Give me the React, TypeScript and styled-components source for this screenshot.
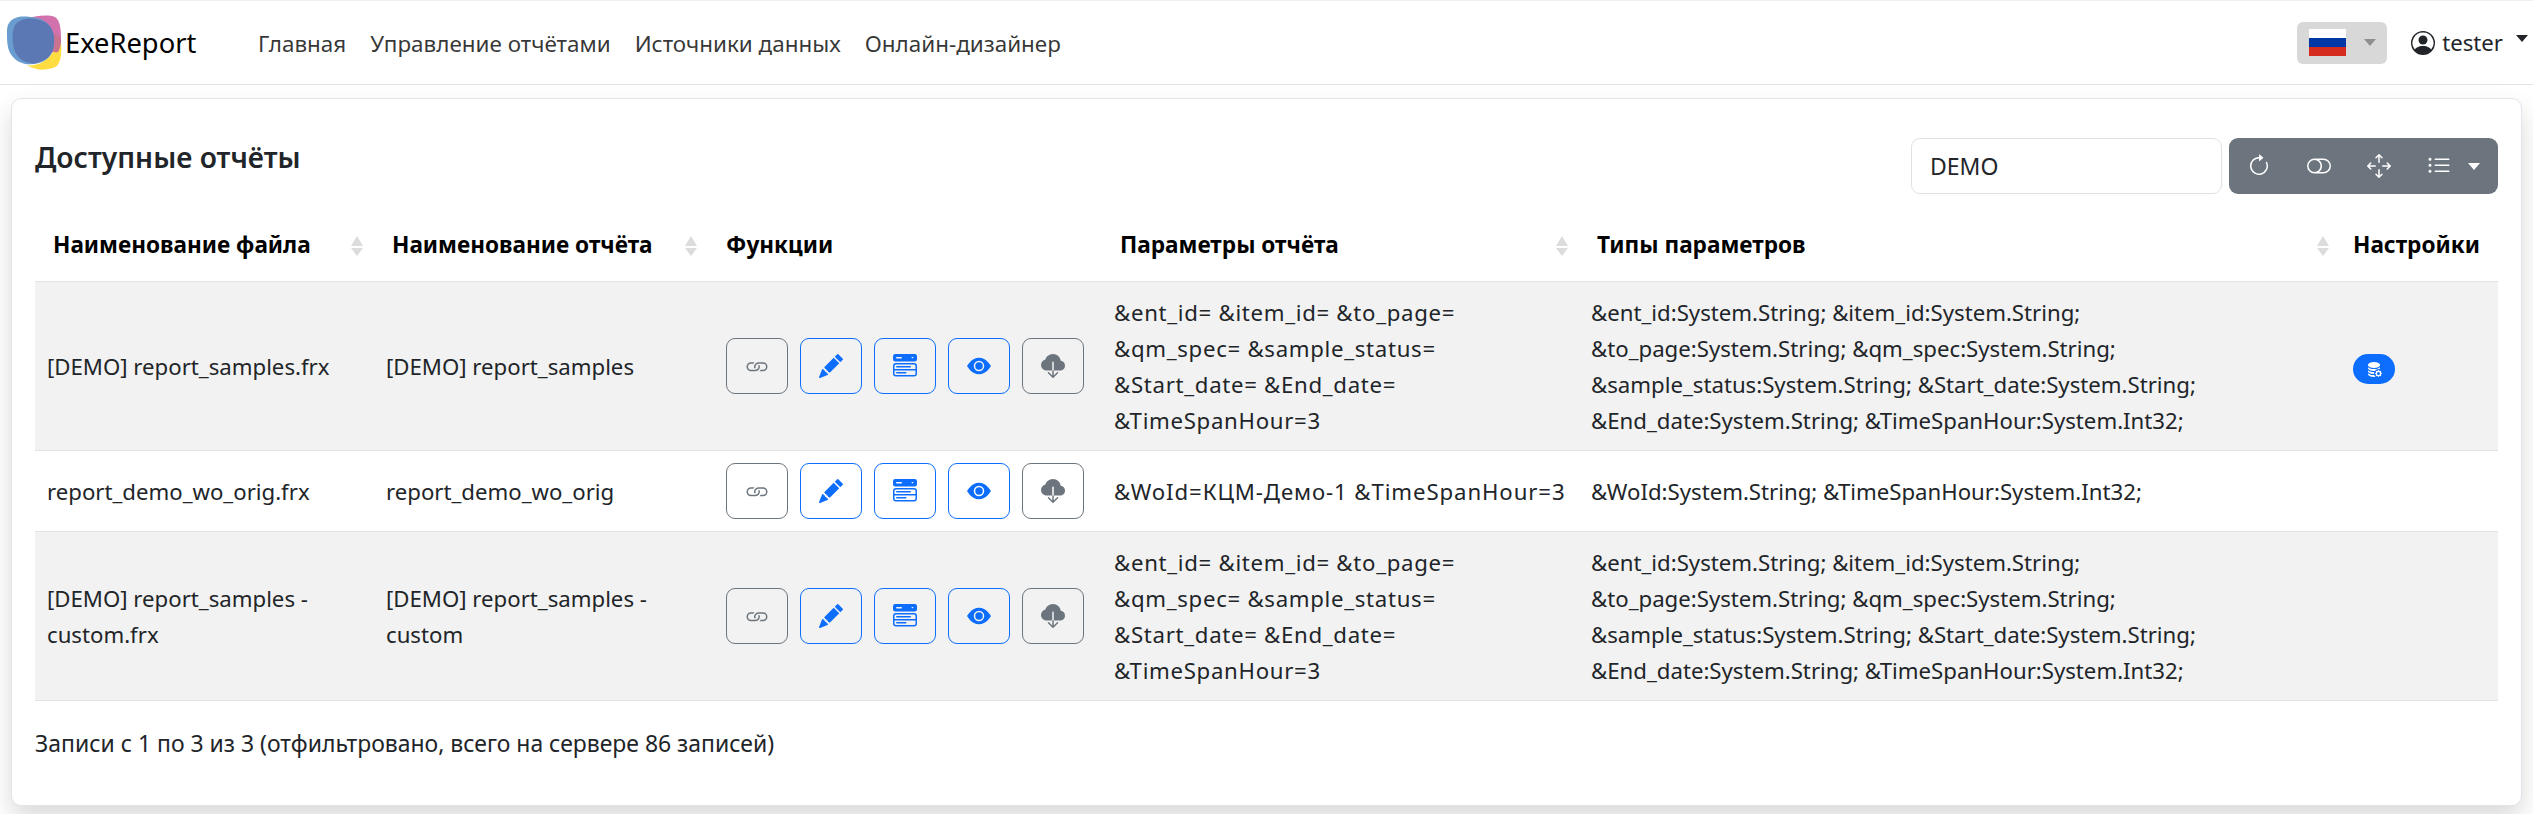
import React from "react";
import styled, { createGlobalStyle } from "styled-components";
import {
  BsArrowClockwise,
  BsArrowsMove,
  BsCloudDownloadFill,
  BsDatabaseFillGear,
  BsEyeFill,
  BsLink,
  BsListUl,
  BsMenuButtonWideFill,
  BsPencilFill,
  BsPersonCircle,
  BsToggleOff,
} from "react-icons/bs";

const LONG_PARAMS = [
  "&ent_id= &item_id= &to_page=",
  "&qm_spec= &sample_status=",
  "&Start_date= &End_date=",
  "&TimeSpanHour=3",
];
const LONG_TYPES =
  "&ent_id:System.String; &item_id:System.String; &to_page:System.String; &qm_spec:System.String; &sample_status:System.String; &Start_date:System.String; &End_date:System.String; &TimeSpanHour:System.Int32;";

const reports = [
  {
    file: "[DEMO] report_samples.frx",
    name: "[DEMO] report_samples",
    params: LONG_PARAMS,
    types: LONG_TYPES,
    settings: true,
    spacing: 0.7,
  },
  {
    file: "report_demo_wo_orig.frx",
    name: "report_demo_wo_orig",
    params: ["&WoId=КЦМ-Демо-1 &TimeSpanHour=3"],
    types: "&WoId:System.String; &TimeSpanHour:System.Int32;",
    settings: false,
    spacing: 0.9,
  },
  {
    file: "[DEMO] report_samples - custom.frx",
    name: "[DEMO] report_samples - custom",
    params: LONG_PARAMS,
    types: LONG_TYPES,
    settings: false,
    spacing: 0.7,
  },
];

const columns = [
  { title: "Наименование файла", width: 339, sortRight: 11 },
  { title: "Наименование отчёта", width: 340, sortRight: 17 },
  { title: "Функции", width: 388 },
  { title: "Параметры отчёта", width: 477, sortRight: 11 },
  { title: "Типы параметров", width: 762, sortRight: 12 },
  { title: "Настройки", width: 157 },
];

const App = () => {
  return (
    <>
      <GlobalStyle />
      <StyledNavbar>
        <StyledBrand>
          <svg width="56" height="56" viewBox="0 0 56 56">
            <path
              d="M18 4 C28 1 40 -1 48 2 C53 5 54 14 54 24 C54 30 53 36 50 40 L30 30Z"
              fill="#d271ab"
            />
            <path
              d="M20 50 C30 52 40 46 47 36 C50 32 53 30 54 28 C55 38 54 46 50 51 C44 55 30 57 20 50Z"
              fill="#ffdc3f"
            />
            <path
              d="M2 8 C8 0 18 1 30 3 C42 6 47 14 47 26 C47 38 42 45 32 48 C22 51 12 49 6 42 C0 36 0 26 0 18 C0 14 0 11 2 8Z"
              fill="#6a9dcf"
            />
            <path
              d="M47 18 C50 20 54 22 54 26 C54 30 53 34 51 37 C49 38 47 37 46 36 C48 30 48 24 47 18Z"
              fill="#c9738f"
            />
            <path
              d="M8 10 C14 2 28 2 38 7 C46 12 48 20 47 30 C46 40 40 45 30 48 C20 50 10 44 7 34 C5 26 5 16 8 10Z"
              fill="#5c78b4"
            />
          </svg>
          <StyledBrandName>ExeReport</StyledBrandName>
        </StyledBrand>
        <StyledNavLinks>
          <StyledNavLink>Главная</StyledNavLink>
          <StyledNavLink>Управление отчётами</StyledNavLink>
          <StyledNavLink>Источники данных</StyledNavLink>
          <StyledNavLink>Онлайн-дизайнер</StyledNavLink>
        </StyledNavLinks>
        <StyledNavRight>
          <StyledLangButton>
            <StyledFlag>
              <StyledFlagStripe $color="#ffffff" />
              <StyledFlagStripe $color="#0039a6" />
              <StyledFlagStripe $color="#d52b1e" />
            </StyledFlag>
            <StyledCaret $color="#8f8f8f" />
          </StyledLangButton>
          <StyledUser>
            <BsPersonCircle size={24} />
            <span>tester</span>
            <StyledCaret $color="#212529" />
          </StyledUser>
        </StyledNavRight>
      </StyledNavbar>

      <StyledCard>
        <StyledCardHead>
          <StyledTitle>Доступные отчёты</StyledTitle>
          <StyledTools>
            <StyledSearch defaultValue="DEMO" />
            <StyledToolGroup>
              <StyledToolButton>
                <BsArrowClockwise size={24} />
              </StyledToolButton>
              <StyledToolButton>
                <BsToggleOff size={24} />
              </StyledToolButton>
              <StyledToolButton>
                <BsArrowsMove size={24} />
              </StyledToolButton>
              <StyledToolButton>
                <BsListUl size={24} />
                <StyledCaret $color="#ffffff" />
              </StyledToolButton>
            </StyledToolGroup>
          </StyledTools>
        </StyledCardHead>

        <StyledTable>
          <colgroup>
            {columns.map((col) => (
              <col key={col.title} width={col.width} />
            ))}
          </colgroup>
          <thead>
            <tr>
              {columns.map((col) => (
                <StyledTh key={col.title} $sortable={col.sortRight !== undefined}>
                  {col.title}
                  {col.sortRight !== undefined ? (
                    <StyledSort $right={col.sortRight}>
                      <StyledSortUp />
                      <StyledSortDown />
                    </StyledSort>
                  ) : null}
                </StyledTh>
              ))}
            </tr>
          </thead>
          <tbody>
            {reports.map((report, index) => (
              <StyledRow key={report.file} $odd={index % 2 === 0}>
                <StyledTd>{report.file}</StyledTd>
                <StyledTd>{report.name}</StyledTd>
                <StyledTd>
                  <StyledActions>
                    <StyledAction $variant="gray">
                      <BsLink size={24} />
                    </StyledAction>
                    <StyledAction $variant="blue">
                      <BsPencilFill size={24} />
                    </StyledAction>
                    <StyledAction $variant="blue">
                      <BsMenuButtonWideFill size={24} />
                    </StyledAction>
                    <StyledAction $variant="blue">
                      <BsEyeFill size={24} />
                    </StyledAction>
                    <StyledAction $variant="gray">
                      <BsCloudDownloadFill size={24} />
                    </StyledAction>
                  </StyledActions>
                </StyledTd>
                <StyledParamsTd $spacing={report.spacing}>
                  {report.params.map((line) => (
                    <StyledParamLine key={line}>{line}</StyledParamLine>
                  ))}
                </StyledParamsTd>
                <StyledTd>{report.types}</StyledTd>
                <StyledTd>
                  {report.settings ? (
                    <StyledBadge>
                      <BsDatabaseFillGear size={16} />
                    </StyledBadge>
                  ) : null}
                </StyledTd>
              </StyledRow>
            ))}
          </tbody>
        </StyledTable>

        <StyledInfo>
          Записи с 1 по 3 из 3 (отфильтровано, всего на сервере 86 записей)
        </StyledInfo>
      </StyledCard>
    </>
  );
};

export default App;

const FONT = `"Noto Sans", "Open Sans", sans-serif`;

const GlobalStyle = createGlobalStyle`
  html, body {
    margin: 0;
    padding: 0;
    background: #ffffff;
  }

  body {
    font-family: ${FONT};
    font-size: 22.2px;
    line-height: 36px;
    color: #212529;
  }

  #root {
    height: 814px;
    overflow: visible;
  }
`;

const StyledNavbar = styled.nav`
  height: 85px;
  box-sizing: border-box;
  border-top: 1px solid #f0f0f0;
  border-bottom: 1px solid #e3e3e6;
  display: flex;
  align-items: center;
  padding: 0 5px 0 7px;
`;

const StyledBrand = styled.div`
  display: flex;
  align-items: center;
  gap: 2px;
  width: 251px;
`;

const StyledBrandName = styled.span`
  font-size: 27.3px;
  color: #000000;
`;

const StyledNavLinks = styled.div`
  display: flex;
  gap: 24px;
  flex: 1;
  padding-top: 2px;
  font-size: 22.45px;
`;

const StyledNavLink = styled.a`
  color: rgba(0, 0, 0, 0.8);
`;

const StyledNavRight = styled.div`
  display: flex;
  align-items: center;
  gap: 24px;
`;

const StyledLangButton = styled.div`
  width: 90px;
  height: 42px;
  box-sizing: border-box;
  padding: 0 11px 0 12px;
  background: #d8d8d8;
  border-radius: 6px;
  display: flex;
  align-items: center;
  justify-content: space-between;
`;

const StyledFlag = styled.div`
  width: 37px;
  height: 28px;
  display: flex;
  flex-direction: column;
`;

const StyledFlagStripe = styled.span<{ $color: string }>`
  flex: 1;
  background: ${(p) => p.$color};
`;

const StyledCaret = styled.span<{ $color: string }>`
  display: inline-block;
  width: 0;
  height: 0;
  border-top: 7px solid ${(p) => p.$color};
  border-left: 6.5px solid transparent;
  border-right: 6.5px solid transparent;
`;

const StyledUser = styled.div`
  display: flex;
  align-items: center;
  gap: 7px;
  color: #212529;

  span:last-child {
    margin-left: 6px;
    margin-top: -8px;
  }
`;

const StyledCard = styled.main`
  margin: 13px 11px 0;
  height: 708px;
  box-sizing: border-box;
  padding: 24px 23px 0;
  background: #ffffff;
  border: 1px solid #e3e3ec;
  border-radius: 10px;
  box-shadow: 0 12px 24px rgba(0, 0, 0, 0.15);
`;

const StyledCardHead = styled.div`
  display: flex;
  justify-content: space-between;
  padding-top: 15px;
  height: 71px;
  box-sizing: border-box;
`;

const StyledTitle = styled.h5`
  margin: -1px 0 0;
  font-size: 28.2px;
  font-weight: 600;
  line-height: 40px;
`;

const StyledTools = styled.div`
  display: flex;
  gap: 7px;
`;

const StyledSearch = styled.input`
  width: 311px;
  height: 56px;
  box-sizing: border-box;
  padding: 0 18px;
  border: 1px solid #dee2e6;
  border-radius: 9px;
  font: inherit;
  font-size: 23px;
  color: #212529;
  outline: none;
`;

const StyledToolGroup = styled.div`
  height: 56px;
  display: flex;
  background: #6c757d;
  border-radius: 9px;
  color: #ffffff;
`;

const StyledToolButton = styled.div`
  display: flex;
  align-items: center;
  justify-content: center;
  gap: 17px;
  padding: 0 18px;
  min-width: 24px;
`;

const StyledTable = styled.table`
  width: 2463px;
  table-layout: fixed;
  border-collapse: collapse;
`;

const StyledTh = styled.th<{ $sortable: boolean }>`
  position: relative;
  height: 87px;
  box-sizing: border-box;
  padding: 16px 12px 0 ${(p) => (p.$sortable ? "18px" : "12px")};
  text-align: left;
  font-size: 22.6px;
  font-weight: 700;
  vertical-align: middle;
  border-bottom: 1.5px solid #e5e5e8;
  color: #000000;
  white-space: nowrap;
`;

const StyledSort = styled.span<{ $right: number }>`
  position: absolute;
  right: ${(p) => p.$right}px;
  top: 42px;
  display: flex;
  flex-direction: column;
  gap: 2px;
`;

const StyledSortUp = styled.span`
  width: 0;
  height: 0;
  border-bottom: 10px solid #dcdcdc;
  border-left: 6px solid transparent;
  border-right: 6px solid transparent;
`;

const StyledSortDown = styled.span`
  width: 0;
  height: 0;
  border-top: 8px solid #dcdcdc;
  border-left: 6px solid transparent;
  border-right: 6px solid transparent;
`;

const StyledRow = styled.tr<{ $odd: boolean }>`
  background: ${(p) => (p.$odd ? "#f2f2f2" : "#ffffff")};
`;

const StyledTd = styled.td`
  padding: 13px 12px 11px;
  vertical-align: middle;
  border-bottom: 1px solid #e0e2e6;
  color: #212529;
`;

const StyledParamsTd = styled(StyledTd)<{ $spacing: number }>`
  letter-spacing: ${(p) => p.$spacing}px;
  white-space: nowrap;
`;

const StyledParamLine = styled.div``;

const StyledActions = styled.div`
  display: flex;
  gap: 12px;
  margin: -1px 0 1px;
`;

const StyledAction = styled.button<{ $variant: "gray" | "blue" }>`
  width: 62px;
  height: 56px;
  padding: 0;
  display: flex;
  align-items: center;
  justify-content: center;
  background: transparent;
  border-radius: 9px;
  border: 1.5px solid ${(p) => (p.$variant === "blue" ? "#0d6efd" : "#6c757d")};
  color: ${(p) => (p.$variant === "blue" ? "#0d6efd" : "#6c757d")};
`;

const StyledBadge = styled.span`
  display: inline-flex;
  align-items: center;
  justify-content: center;
  width: 42px;
  height: 30px;
  border-radius: 15px;
  background: #0d6efd;
  color: #ffffff;
  vertical-align: middle;
`;

const StyledInfo = styled.div`
  margin-top: 24px;
  font-size: 22.95px;
`;
